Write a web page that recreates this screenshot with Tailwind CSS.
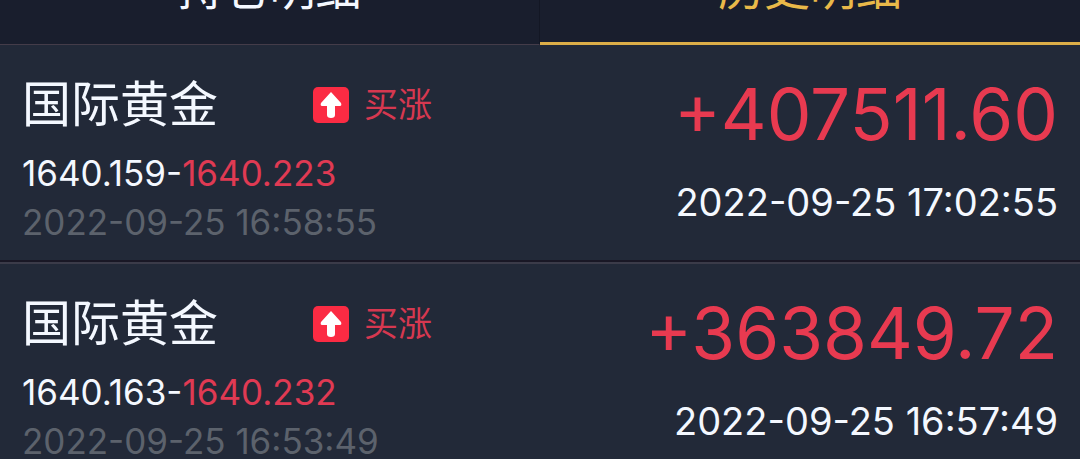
<!DOCTYPE html>
<html lang="zh-CN">
<head>
    <meta charset="UTF-8">
    <meta name="viewport" content="width=device-width, initial-scale=1.0">
    <title>历史明细</title>
    <script src="https://cdn.jsdelivr.net/npm/@tailwindcss/browser@4"></script>
</head>
<body class="bg-[#222938] text-[#f4f8ff] font-['Inter','Noto_Sans_CJK_SC',sans-serif] overflow-hidden">
    <!-- Tabs -->
    <nav class="grid grid-cols-2 -mt-9 bg-[#191e2d] text-[46px] leading-[48px]">
        <button class="pb-8 border-b border-r border-b-[#443c49] border-r-[#131724]">持仓明细</button>
        <button class="pb-[30px] border-b-3 border-[#dcae48] text-[#e9b949]">历史明细</button>
    </nav>

    <!-- Order list -->
    <main>
        <article class="flex justify-between px-[22px] pt-8 pb-[15px] border-b-2 border-[#3b3b49] shadow-[inset_0_-2px_0_#191725]">
            <div>
                <div class="flex items-center h-14">
                    <h2 class="w-[291px] text-[49px] leading-[56px]">国际黄金</h2>
                    <svg class="w-9 h-9" viewBox="0 0 36 36" aria-hidden="true">
                        <rect width="36" height="36" rx="5" fill="#fb2b43"/>
                        <path d="M18 5 L28 16 Q29 19 27 19 H22 V28 Q22 31 18 31 Q14 31 14 28 V19 H9 Q7 19 8 16 Z" fill="#fff"/>
                    </svg>
                    <span class="ml-[15px] text-[34px] leading-[48px] text-[#d63850]">买涨</span>
                </div>
                <p class="mt-4 text-[35px] leading-[49px]">1640.159-<span class="text-[#e03a53]">1640.223</span></p>
                <p class="text-[35px] leading-[49px] text-[#5c626c]">2022-09-25 16:58:55</p>
            </div>
            <div class="text-right">
                <p class="text-[71px] leading-[74px] text-[#e83a50]">+407511.60</p>
                <p class="mt-[27px] text-[38px] leading-[49px]">2022-09-25 17:02:55</p>
            </div>
        </article>
        <article class="flex justify-between px-[22px] pt-8 pb-[15px] border-b-2 border-[#3b3b49] shadow-[inset_0_-2px_0_#191725]">
            <div>
                <div class="flex items-center h-14">
                    <h2 class="w-[291px] text-[49px] leading-[56px]">国际黄金</h2>
                    <svg class="w-9 h-9" viewBox="0 0 36 36" aria-hidden="true">
                        <rect width="36" height="36" rx="5" fill="#fb2b43"/>
                        <path d="M18 5 L28 16 Q29 19 27 19 H22 V28 Q22 31 18 31 Q14 31 14 28 V19 H9 Q7 19 8 16 Z" fill="#fff"/>
                    </svg>
                    <span class="ml-[15px] text-[34px] leading-[48px] text-[#d63850]">买涨</span>
                </div>
                <p class="mt-4 text-[35px] leading-[49px]">1640.163-<span class="text-[#e03a53]">1640.232</span></p>
                <p class="text-[35px] leading-[49px] text-[#5c626c]">2022-09-25 16:53:49</p>
            </div>
            <div class="text-right">
                <p class="text-[71px] leading-[74px] text-[#e83a50]">+363849.72</p>
                <p class="mt-[27px] text-[38px] leading-[49px]">2022-09-25 16:57:49</p>
            </div>
        </article>
    </main>
</body>
</html>
